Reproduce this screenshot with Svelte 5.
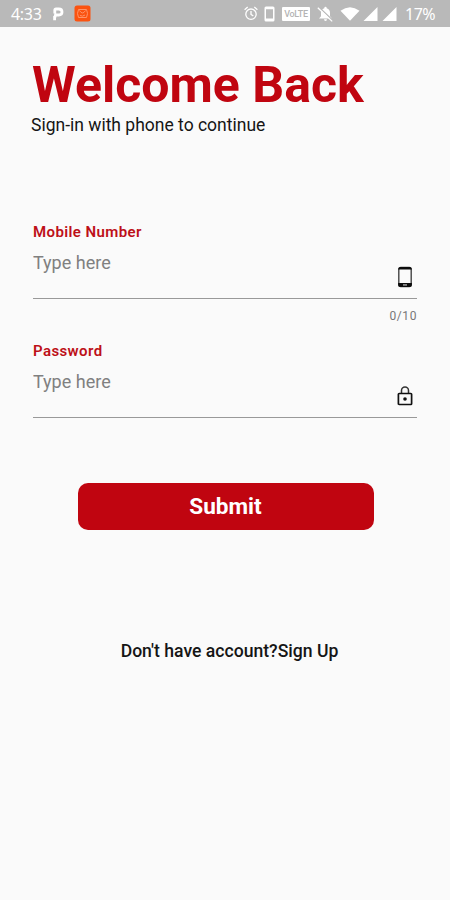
<script lang="ts">
	let mobile = $state('');
	let password = $state('');

	const maxLength = 10;
</script>

<div class="screen">
	<header class="status">
		<span class="time">4:33</span>
		<svg width="12" height="14" viewBox="0 0 12 14">
			<path d="M2.6 13.2V9M2.8 6.4V3.2Q2.8 2 4 2H6.8Q10 2 10 5T6.8 8H3.5L2.6 11" fill="none" stroke="#fff" stroke-width="2.8" />
		</svg>
		<svg class="app" width="17" height="17" viewBox="0 0 17 17">
			<rect x=".5" y=".5" width="16" height="16" rx="2.5" fill="#fb5310" />
			<path d="M4.5 4.5h8l1 4-1 4h-8l-1-4zM5.5 5.5q3 5 6 0M6 10.5q2.5 1.5 5-.5" fill="none" stroke="#ff9468" stroke-width="1" />
		</svg>

		<div class="indicators">
			<svg width="14" height="15" viewBox="0 0 14 15" fill="none" stroke="#fff" stroke-width="1.3">
				<circle cx="7" cy="8.2" r="5.2" />
				<path d="M7 5v3.5l2.3 1.4M.6 3.7 3.7 1M13.4 3.7 10.3 1" />
			</svg>
			<svg class="device" width="11" height="16" viewBox="0 0 11 16">
				<path d="M2 .5h7q1.5 0 1.5 1.5v12q0 1.5-1.5 1.5H2Q.5 15.5.5 14V2Q.5.5 2 .5zM2 3.2v9.3h7V3.2z" fill="#fff" fill-rule="evenodd" />
			</svg>
			<span class="volte">VoLTE</span>
			<svg class="bell" width="17" height="16" viewBox="0 0 17 16">
				<path d="M8.5.8q1.2 0 1.2 1.4Q13 3.2 13 7v3.3l2 2.2H2l2-2.2V7q0-3.8 3.3-4.8Q7.3.8 8.5.8zM7 13.3h3q0 1.7-1.5 1.7T7 13.3z" fill="#fff" />
				<path d="M1.5.8 16 14.5" stroke="#b9b9b9" stroke-width="1.3" />
				<path d="M.8 1.7 15.2 15.4" stroke="#fff" stroke-width="1.3" />
			</svg>
			<svg class="wifi" width="20" height="14" viewBox="0 0 20 14">
				<path d="M.5 3.8Q10-3.2 19.5 3.8L10 13.8z" fill="#fff" />
			</svg>
			<svg class="signal" width="15" height="14" viewBox="0 0 15 14"><path d="M14.5 0v14H.5z" fill="#fff" /></svg>
			<svg class="signal" width="15" height="14" viewBox="0 0 15 14"><path d="M14.5 0v14H.5z" fill="#fff" /></svg>
			<span class="battery">17%</span>
		</div>
	</header>

	<main>
		<h1>Welcome Back</h1>
		<p class="subtitle">Sign-in with phone to continue</p>

		<form onsubmit={(e) => e.preventDefault()}>
			<label class="field">
				<span class="label">Mobile Number</span>
				<span class="control">
					<input type="tel" placeholder="Type here" maxlength={maxLength} bind:value={mobile} />
					<svg width="16" height="22" viewBox="0 0 16 22">
						<rect x="1.8" y="1.5" width="12.4" height="19" rx="2" fill="none" stroke="#444" stroke-width="1.4" />
						<path d="M3 .9h10q1.6 0 1.9 2.6H1.1Q1.400.9 3 .9zM1.100 17h13.800v1.800q0 2.300-2.300 2.300H3.400q-2.300 0-2.300-2.300zM6 18.500v1.100h4v-1.100z" fill="#0c0c0c" fill-rule="evenodd" />
					</svg>
				</span>
			</label>
			<span class="counter">{mobile.length}/{maxLength}</span>

			<label class="field">
				<span class="label">Password</span>
				<span class="control">
					<input type="password" placeholder="Type here" bind:value={password} />
					<svg width="16" height="22" viewBox="0 0 16 22">
						<path d="M4.5 8.5V5.4a3.5 3.5 0 0 1 7 0v3.1" fill="none" stroke="#333" stroke-width="1.5" />
						<rect x="1.4" y="8.5" width="13.2" height="11" rx=".8" fill="none" stroke="#111" stroke-width="1.7" />
						<circle cx="8" cy="14" r="1.8" fill="#111" />
					</svg>
				</span>
			</label>

			<button class="submit">Submit</button>
		</form>

		<p class="signup">Don't have account?<b>Sign Up</b></p>
	</main>
</div>

<style>
	:global(body) {
		background: #fafafa;
	}

	.screen {
		min-height: 900px;
		box-sizing: border-box;
		background: #fafafa;
		color: #151515;
		font-family: Roboto, sans-serif;
	}

	.status {
		display: flex;
		align-items: center;
		height: 27px;
		padding: 0 15px 0 11px;
		box-sizing: border-box;
		background: #b9b9b9;
		color: #fff;
		font-family: 'Noto Sans', sans-serif;
		font-size: 16px;
		line-height: 27px;
	}

	.time {
		width: 41px;
		padding-top: 1px;
		letter-spacing: -0.3px;
	}

	.app {
		margin-left: 10px;
	}

	.indicators {
		display: flex;
		align-items: center;
		margin-left: auto;
	}

	.device {
		margin-left: 6px;
	}

	.volte {
		width: 28px;
		height: 14px;
		margin-left: 7px;
		border-radius: 1px;
		background: #fff;
		color: #b4b4b4;
		font-family: Roboto, sans-serif;
		font-size: 9px;
		font-weight: 500;
		line-height: 14px;
		text-align: center;
		letter-spacing: -0.3px;
	}

	.bell {
		margin-left: 7px;
	}

	.wifi {
		margin-left: 6px;
	}

	.signal {
		margin-left: 3px;
	}

	.signal + .signal {
		margin-left: 4px;
	}

	.battery {
		width: 30px;
		margin-left: 8px;
		padding-top: 1px;
		letter-spacing: -0.5px;
	}

	main {
		padding: 29px 33px 0;
	}

	h1 {
		margin: 0 0 0 -1px;
		color: #c00510;
		font-size: 50px;
		font-weight: 700;
		line-height: 58px;
		white-space: nowrap;
	}

	.subtitle {
		margin: 0 0 0 -2px;
		font-size: 17.5px;
		line-height: 22px;
		white-space: nowrap;
	}

	form {
		display: flex;
		flex-direction: column;
		margin-top: 86px;
	}

	.field {
		display: flex;
		flex-direction: column;
	}

	.label {
		color: #bd1018;
		font-size: 15px;
		font-weight: 600;
		line-height: 20px;
		letter-spacing: 0.4px;
	}

	.control {
		display: flex;
		justify-content: space-between;
		height: 56px;
		border-bottom: 1px solid #999;
	}

	.control svg {
		margin: 24px 4px 0 0;
	}

	input {
		width: 300px;
		height: 24px;
		margin-top: 9px;
		padding: 0;
		border: none;
		outline: none;
		background: transparent;
		font: 18px/24px Roboto, sans-serif;
	}

	input::placeholder {
		color: #808080;
		opacity: 1;
	}

	.counter {
		height: 18px;
		margin: 8px 0 16px;
		color: #777;
		font-size: 12px;
		line-height: 18px;
		letter-spacing: 0.6px;
		text-align: right;
	}

	.submit {
		align-self: center;
		width: 296px;
		height: 47px;
		margin: 65px 0 0 1px;
		padding: 1px 0 0;
		border: none;
		border-radius: 10px;
		background: #c00510;
		color: #fff;
		font: 700 22.6px/46px Roboto, sans-serif;
		cursor: pointer;
	}

	.signup {
		margin: 110px 0 0;
		padding-left: 9px;
		font-size: 17.6px;
		font-weight: 500;
		line-height: 22px;
		text-align: center;
	}

	.signup b {
		font-weight: 500;
	}
</style>
